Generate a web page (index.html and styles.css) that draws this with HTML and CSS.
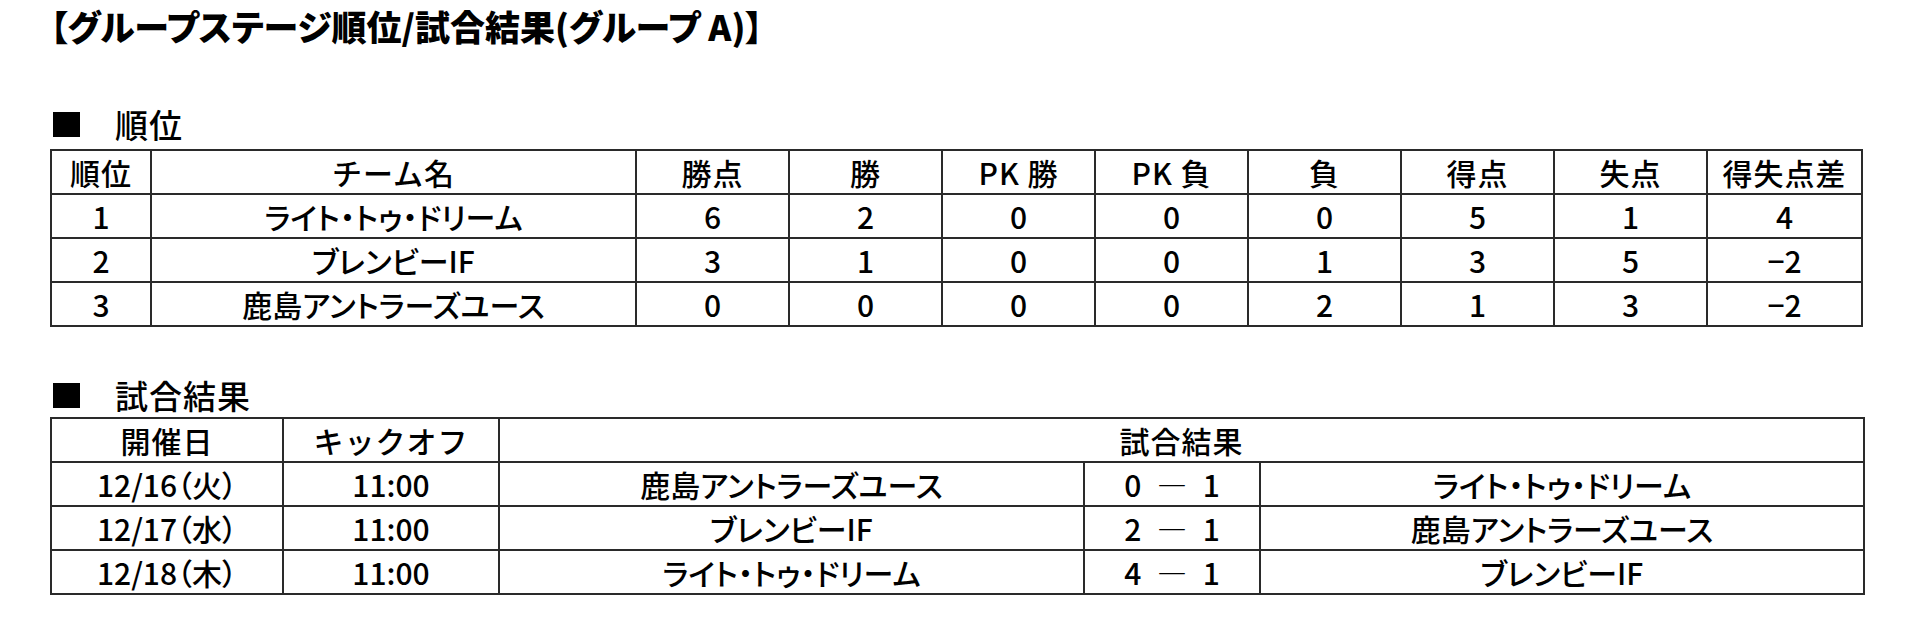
FILE: index.html
```html
<!DOCTYPE html>
<html lang="ja">
<head>
<meta charset="utf-8">
<title>グループステージ順位/試合結果</title>
<link rel="stylesheet" href="styles.css">
</head>
<body>
<h1 class="title">【グループステージ順位/試合結果(グループ A)】</h1>

<section class="block block-standings">
  <h2 class="heading"><span class="sq"></span><span class="heading-text">順位</span></h2>
  <table class="grid standings">
    <colgroup>
      <col class="c-rank"><col class="c-team"><col class="c-num"><col class="c-num"><col class="c-num"><col class="c-num"><col class="c-num"><col class="c-num"><col class="c-num"><col class="c-diff">
    </colgroup>
    <thead>
      <tr><th>順位</th><th>チーム名</th><th>勝点</th><th>勝</th><th>PK 勝</th><th>PK 負</th><th>負</th><th>得点</th><th>失点</th><th>得失点差</th></tr>
    </thead>
    <tbody>
      <tr><td>1</td><td class="team">ライト・トゥ・ドリーム</td><td>6</td><td>2</td><td>0</td><td>0</td><td>0</td><td>5</td><td>1</td><td>4</td></tr>
      <tr><td>2</td><td class="team">ブレンビーIF</td><td>3</td><td>1</td><td>0</td><td>0</td><td>1</td><td>3</td><td>5</td><td>−2</td></tr>
      <tr><td>3</td><td class="team">鹿島アントラーズユース</td><td>0</td><td>0</td><td>0</td><td>0</td><td>2</td><td>1</td><td>3</td><td>−2</td></tr>
    </tbody>
  </table>
</section>

<section class="block block-results">
  <h2 class="heading"><span class="sq"></span><span class="heading-text">試合結果</span></h2>
  <table class="grid results">
    <colgroup>
      <col class="r-date"><col class="r-time"><col class="r-home"><col class="r-score"><col class="r-away">
    </colgroup>
    <thead>
      <tr><th>開催日</th><th>キックオフ</th><th colspan="3">試合結果</th></tr>
    </thead>
    <tbody>
      <tr><td class="date">12/16（火）</td><td class="time">11:00</td><td class="team">鹿島アントラーズユース</td><td class="score">0 ― 1</td><td class="team">ライト・トゥ・ドリーム</td></tr>
      <tr><td class="date">12/17（水）</td><td class="time">11:00</td><td class="team">ブレンビーIF</td><td class="score">2 ― 1</td><td class="team">鹿島アントラーズユース</td></tr>
      <tr><td class="date">12/18（木）</td><td class="time">11:00</td><td class="team">ライト・トゥ・ドリーム</td><td class="score">4 ― 1</td><td class="team">ブレンビーIF</td></tr>
    </tbody>
  </table>
</section>
</body>
</html>
```

FILE: styles.css
```css
html, body {
  background: #fff;
}
body {
  margin: 0;
  padding: 0 0 0 50px;
  color: #000;
  font-family: "Noto Sans CJK JP", "Noto Sans", sans-serif;
}
.title {
  margin: 0;
  height: 52px;
  line-height: 52px;
  font-size: 35px;
  font-weight: 900;
  font-feature-settings: "palt";
  white-space: nowrap;
}
.block-standings {
  margin-top: 51px;
}
.block-results {
  margin-top: 47px;
}
.heading {
  margin: 0 0 3px;
  height: 43px;
  line-height: 43px;
  font-size: 33px;
  font-weight: 500;
  letter-spacing: 1px;
  display: flex;
  align-items: center;
}
.sq {
  display: inline-block;
  width: 27px;
  height: 25px;
  background: #000;
  margin-left: 3px;
  margin-right: 35px;
}
.block-results .heading {
  margin-bottom: 0;
}
.grid {
  border-collapse: collapse;
  table-layout: fixed;
  width: 1813px;
  border: 2px solid #111;
}
.grid th, .grid td {
  border: 2px solid #2a2a2a;
  padding: 0;
  height: 42px;
  text-align: center;
  vertical-align: middle;
  font-size: 30px;
  font-weight: 500;
  line-height: 40px;
  white-space: nowrap;
}
.grid th {
  letter-spacing: 1px;
}
.grid .team {
  font-feature-settings: "palt";
}
.c-rank { width: 100px; }
.c-team { width: 485px; }
.c-num { width: 153px; }
.c-diff { width: 155px; }
.r-date { width: 232px; }
.r-time { width: 216px; }
.r-home { width: 585px; }
.r-score { width: 176px; }
.r-away { width: 604px; }
.score {
  word-spacing: 9px;
}
.date {
  font-feature-settings: "palt";
}
```
